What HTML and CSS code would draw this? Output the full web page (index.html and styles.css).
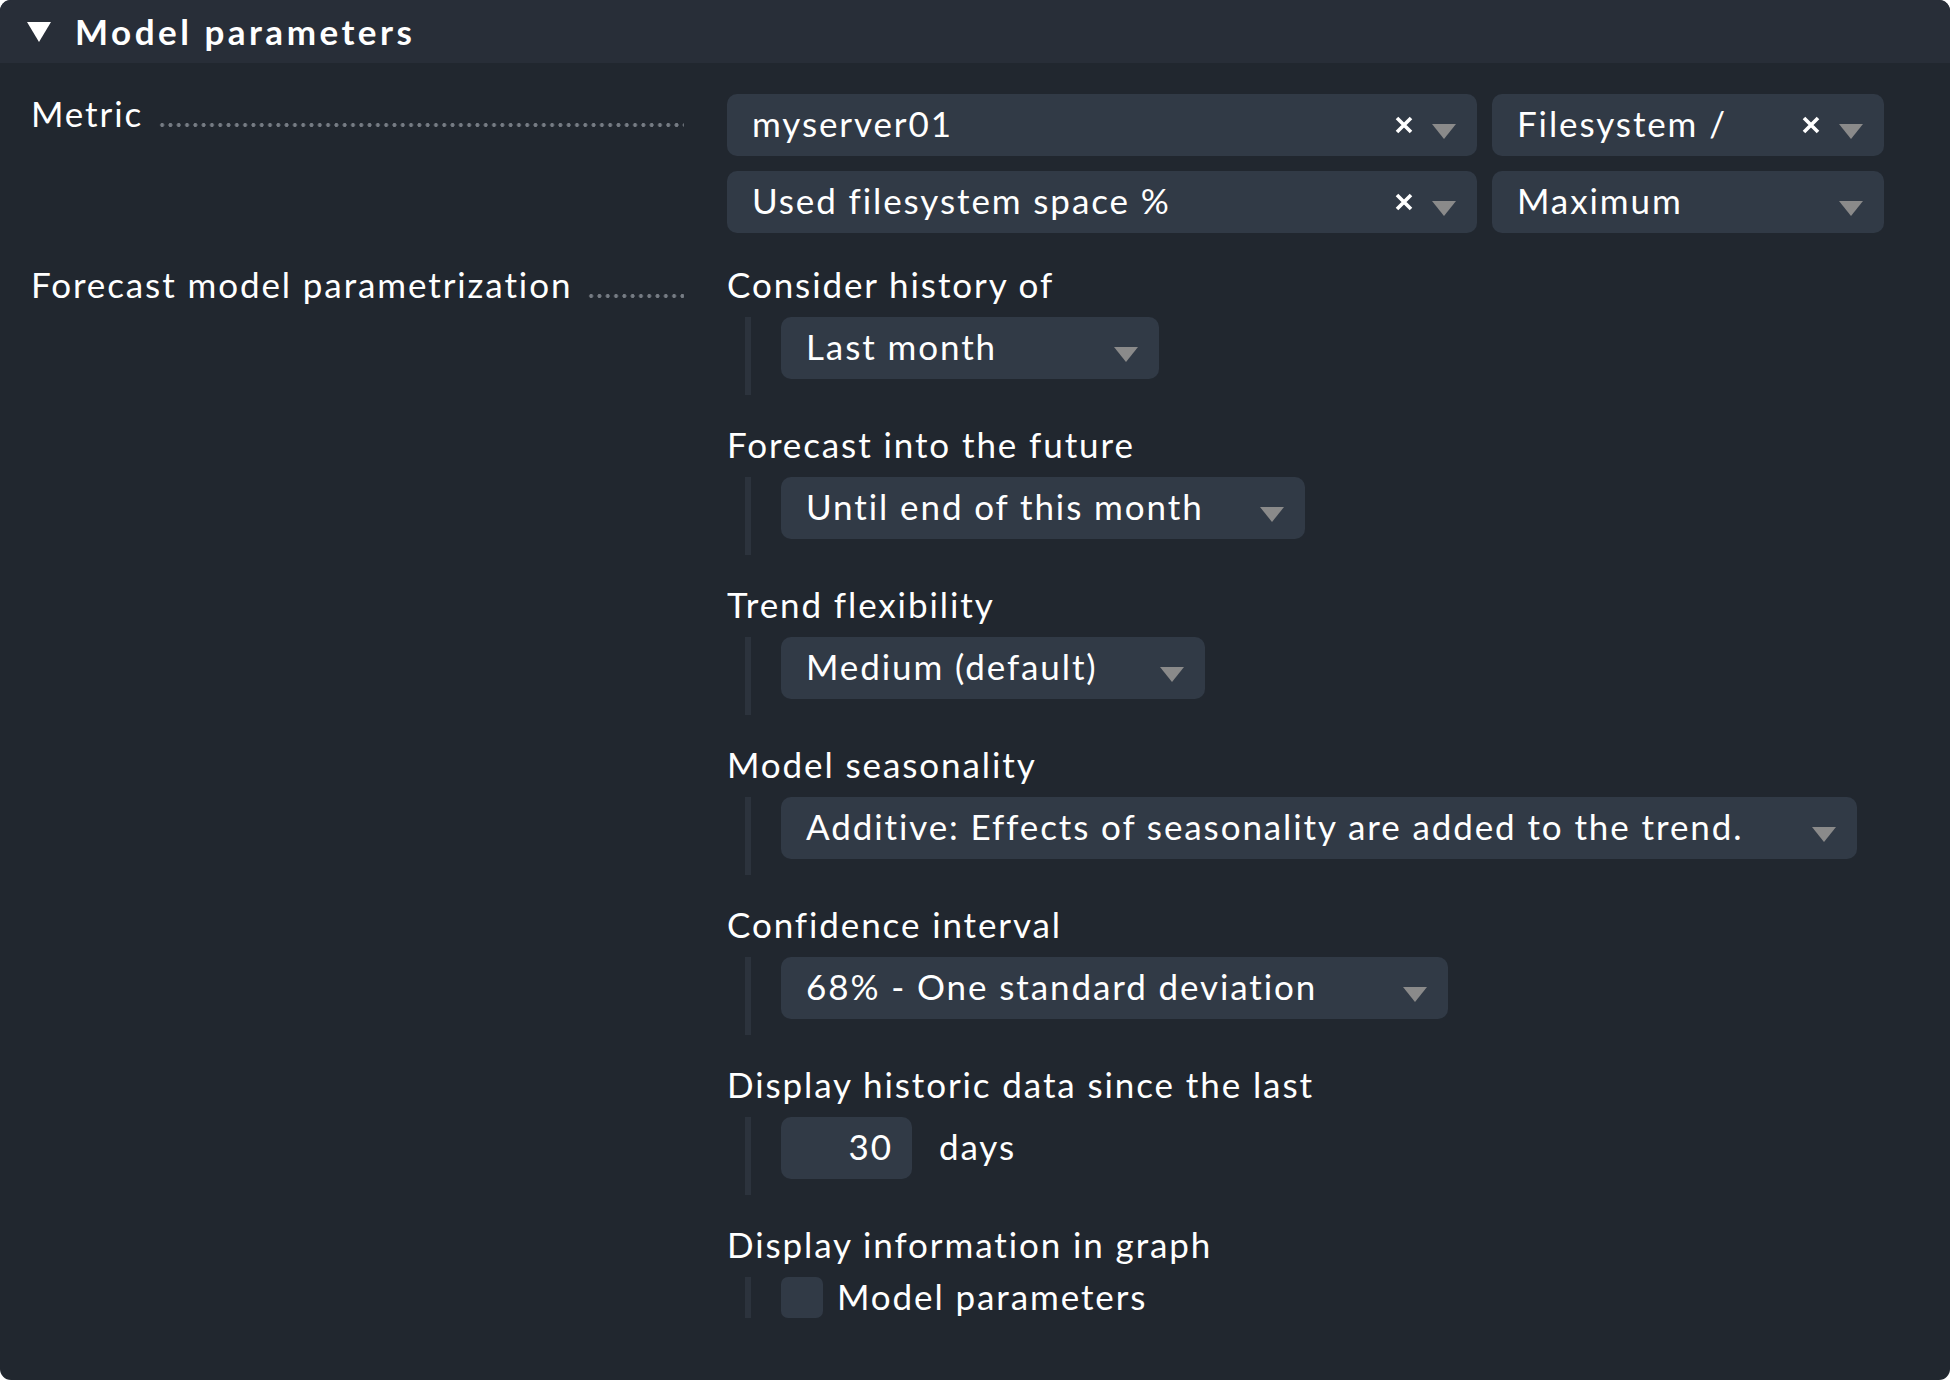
FILE: index.html
```html
<!DOCTYPE html>
<html lang="en">
<head>
<meta charset="utf-8">
<title>Model parameters</title>
<link rel="stylesheet" href="styles.css">
</head>
<body>
<div class="panel">
  <div class="header">
    <svg class="caret" width="24" height="20" viewBox="0 0 24 20"><polygon points="0,0 24,0 12,20" fill="#fff"/></svg>
    <span class="title">Model parameters</span>
  </div>
  <div class="body">
    <div class="row">
      <div class="label"><span class="ltext">Metric</span><span class="dots"></span></div>
      <div class="value">
        <div class="metric-grid">
          <div class="select">
            <span class="stext">myserver01</span>
            <svg class="clear" width="20" height="20" viewBox="0 0 20 20"><path d="M3 3L17 17M17 3L3 17" stroke="#fff" stroke-width="3.6"/></svg>
            <svg class="arrow" width="24" height="15" viewBox="0 0 24 15"><polygon points="0,0 24,0 12,15" fill="#8a8a8a"/></svg>
          </div>
          <div class="select">
            <span class="stext">Filesystem /</span>
            <svg class="clear" width="20" height="20" viewBox="0 0 20 20"><path d="M3 3L17 17M17 3L3 17" stroke="#fff" stroke-width="3.6"/></svg>
            <svg class="arrow" width="24" height="15" viewBox="0 0 24 15"><polygon points="0,0 24,0 12,15" fill="#8a8a8a"/></svg>
          </div>
          <div class="select">
            <span class="stext">Used filesystem space %</span>
            <svg class="clear" width="20" height="20" viewBox="0 0 20 20"><path d="M3 3L17 17M17 3L3 17" stroke="#fff" stroke-width="3.6"/></svg>
            <svg class="arrow" width="24" height="15" viewBox="0 0 24 15"><polygon points="0,0 24,0 12,15" fill="#8a8a8a"/></svg>
          </div>
          <div class="select">
            <span class="stext">Maximum</span>
            <svg class="arrow" width="24" height="15" viewBox="0 0 24 15"><polygon points="0,0 24,0 12,15" fill="#8a8a8a"/></svg>
          </div>
        </div>
      </div>
    </div>

    <div class="row">
      <div class="label"><span class="ltext">Forecast model parametrization</span><span class="dots"></span></div>
      <div class="value">
        <div class="param">
          <div class="plabel">Consider history of</div>
          <div class="pbody">
            <div class="select w-history"><span class="stext">Last month</span>
              <svg class="arrow" width="24" height="15" viewBox="0 0 24 15"><polygon points="0,0 24,0 12,15" fill="#8a8a8a"/></svg></div>
          </div>
        </div>
        <div class="param">
          <div class="plabel">Forecast into the future</div>
          <div class="pbody">
            <div class="select w-future"><span class="stext">Until end of this month</span>
              <svg class="arrow" width="24" height="15" viewBox="0 0 24 15"><polygon points="0,0 24,0 12,15" fill="#8a8a8a"/></svg></div>
          </div>
        </div>
        <div class="param">
          <div class="plabel">Trend flexibility</div>
          <div class="pbody">
            <div class="select w-trend"><span class="stext">Medium (default)</span>
              <svg class="arrow" width="24" height="15" viewBox="0 0 24 15"><polygon points="0,0 24,0 12,15" fill="#8a8a8a"/></svg></div>
          </div>
        </div>
        <div class="param">
          <div class="plabel">Model seasonality</div>
          <div class="pbody">
            <div class="select w-season"><span class="stext">Additive: Effects of seasonality are added to the trend.</span>
              <svg class="arrow" width="24" height="15" viewBox="0 0 24 15"><polygon points="0,0 24,0 12,15" fill="#8a8a8a"/></svg></div>
          </div>
        </div>
        <div class="param">
          <div class="plabel">Confidence interval</div>
          <div class="pbody">
            <div class="select w-conf"><span class="stext">68% - One standard deviation</span>
              <svg class="arrow" width="24" height="15" viewBox="0 0 24 15"><polygon points="0,0 24,0 12,15" fill="#8a8a8a"/></svg></div>
          </div>
        </div>
        <div class="param">
          <div class="plabel">Display historic data since the last</div>
          <div class="pbody inline">
            <div class="numinput">30</div><span class="unit">days</span>
          </div>
        </div>
        <div class="param last">
          <div class="plabel">Display information in graph</div>
          <div class="pbody inline">
            <span class="checkbox"></span><span class="cblabel">Model parameters</span>
          </div>
        </div>
      </div>
    </div>
  </div>
</div>
</body>
</html>
```

FILE: styles.css
```css
html, body {
  margin: 0;
  padding: 0;
  background: #ffffff;
}
body {
  font-family: Lato, "Noto Sans", sans-serif;
  color: #ffffff;
  font-size: 35px;
  letter-spacing: 1.9px;
}
.panel {
  width: 1950px;
  height: 1380px;
  border-radius: 11px;
  overflow: hidden;
  background: #21272f;
}
.header {
  height: 63px;
  background: #282e38;
  display: flex;
  align-items: center;
  padding-left: 27px;
}
.caret {
  display: block;
  margin-top: 1px;
}
.title {
  margin-left: 24px;
  font-weight: 700;
  letter-spacing: 3.5px;
  line-height: 63px;
}
.body {
  padding: 31px 0 0 31px;
  display: flex;
  flex-direction: column;
  gap: 32px;
}
.row {
  display: flex;
  align-items: flex-start;
}
.label {
  width: 653px;
  margin-right: 43px;
  display: flex;
  white-space: nowrap;
}
.ltext {
  line-height: 38px;
  padding-bottom: 2px;
}
.dots {
  flex: 1;
  height: 40px;
  margin-left: 15px;
  background-image: radial-gradient(circle, #767c84 1.7px, rgba(118,124,132,0) 2.2px);
  background-size: 8.3px 6px;
  background-repeat: repeat-x;
  background-position: 0 28px;
}
.value {
  flex: 1;
}
.metric-grid {
  display: grid;
  grid-template-columns: 750px 392px;
  gap: 15px;
}
.select {
  height: 62px;
  background: #313a46;
  border-radius: 10px;
  display: flex;
  align-items: center;
  padding: 0 21px 0 25px;
  box-sizing: border-box;
  white-space: nowrap;
}
.stext {
  flex: 1;
  line-height: 58px;
  padding-bottom: 4px;
}
.clear {
  display: block;
  margin-right: 18px;
}
.arrow {
  display: block;
  margin-top: 12px;
}
.param {
  margin-bottom: 30px;
}
.plabel {
  line-height: 38px;
  padding-bottom: 2px;
  white-space: nowrap;
}
.pbody {
  margin: 12px 0 0 18px;
  border-left: 6px solid #2c333d;
  padding: 0 0 16px 30px;
}
.param.last .pbody {
  padding-bottom: 0;
}
.inline {
  display: flex;
  align-items: center;
}
.w-history { width: 378px; }
.w-future { width: 524px; }
.w-trend { width: 424px; }
.w-season { width: 1076px; }
.w-conf { width: 667px; }
.numinput {
  width: 131px;
  height: 62px;
  box-sizing: border-box;
  background: #313a46;
  border-radius: 10px;
  text-align: right;
  padding-right: 19px;
  line-height: 58px;
  padding-bottom: 4px;
}
.unit {
  margin-left: 27px;
  line-height: 58px;
  padding-bottom: 4px;
}
.checkbox {
  display: block;
  width: 42px;
  height: 41px;
  background: #313a46;
  border-radius: 7px;
}
.cblabel {
  margin-left: 14px;
  line-height: 39px;
  padding-bottom: 2px;
}
```
